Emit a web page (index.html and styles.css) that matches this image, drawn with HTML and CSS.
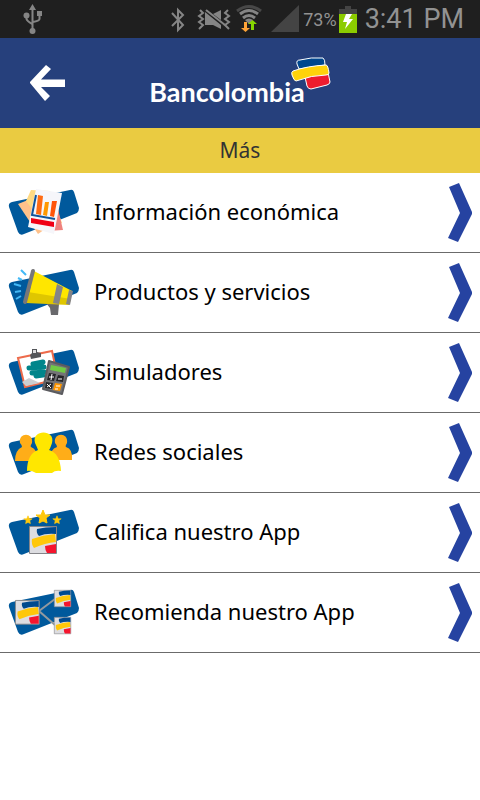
FILE: index.html
```
<!DOCTYPE html>
<html lang="es">
<head>
<meta charset="utf-8">
<meta name="viewport" content="width=device-width, initial-scale=1">
<title>Bancolombia - Más</title>
<link rel="stylesheet" href="styles.css">
</head>
<body>
<svg class="defs" width="0" height="0" aria-hidden="true">
  <defs>
    <path id="plate" fill="#00599c" d="M12 29L70 17Q73 16 74 19L79 35Q79 38 77 40L24 61Q20 63 18 59L9 34Q8 30 12 29Z"/>
    <g id="badge">
      <path fill="#dddde1" stroke="#858589" d="M.5 .5H27.500V27.500H.5Z"/>
      <path fill="#004a8f" d="M8 3Q16 1 27 1V8Q17 7 10 10Q7 7 8 3Z"/>
      <path fill="#ffc709" d="M3 13Q14 9 26 8L27 16Q16 17 5 22Q2 18 3 13Z"/>
      <path fill="#f5152e" d="M16 20L27 18V27H18Q16 24 16 20Z"/>
    </g>
    <path id="star" fill="#ffc80a" stroke="#ffc80a" stroke-linejoin="round" d="M0-7L2-2L7-2L3 1L4 6L0 4L-4 6L-3 1L-7-2L-2-2Z"/>
    <path id="chevron" fill="#2643a1" d="M9 10L19 6L32 35V37L18 65L8 61L20 36Z"/>
  </defs>
</svg>

<div class="status">
  <svg class="usb" width="20" height="30" viewBox="0 0 20 30" fill="none" stroke="#858585" stroke-width="2">
    <path d="M9.500 6V26M3.500 11V15Q4 17 9 20M16.500 10V15Q16 17 10 18"/>
    <g fill="#858585" stroke="none"><path d="M9.500 0L13 6H6ZM14 7H19V12H14Z"/><circle cx="3.500" cy="11.500" r="3"/><circle cx="9.500" cy="27" r="3"/></g>
  </svg>
  <svg class="radios" width="132" height="38" viewBox="0 0 132 38">
    <path fill="none" stroke="#858585" stroke-width="2" d="M1 13L12 25L7 30V10L12 15L1 26"/>
    <g fill="none" stroke="#858585" stroke-width="2"><path d="M29 10L32 13L28 16L32 19L28 22L32 25L28 29M57 10L54 13L58 16L54 19L58 22L54 25L58 29"/></g>
    <path fill="#858585" d="M34 12L50 25V29L42 25H34ZM42 14L50 10V20Z"/>
    <path stroke="#858585" stroke-width="2" d="M35 10L54 25"/>
    <g fill="none" stroke-width="3"><path stroke="#484848" d="M66 11Q78 2 90 11"/><path stroke="#858585" d="M69 14Q78 7 87 14M72 18Q78 13 84 18"/></g>
    <path fill="#858585" d="M74 20Q78 17 82 20L78 24Z"/>
    <path fill="#ffa438" d="M73 22H76V28H79L74.500 32L70 28H73Z"/><path fill="#86d600" d="M80 30V24H77L81.500 20L86 24H83V30Z"/>
    <path fill="#444" d="M128 5V32H100Z"/>
  </svg>
  <span class="percent">73%</span>
  <svg class="battery" width="18" height="28" viewBox="0 0 18 28"><path fill="#444" d="M6 1H12V4H18V9H0V4H6Z"/><path fill="#8ccc00" d="M0 9H18V28H0Z"/><path fill="#fff" d="M7 9H13L10 14H14L6 24L8 17H4Z"/></svg>
  <time class="clock">3:41 PM</time>
</div>

<header class="header">
  <button class="back" type="button" aria-label="Volver">
    <svg width="36" height="38" viewBox="0 0 36 38"><path fill="#fff" d="M16 1L21 5L11 15.500H35V23H11L20 32L15 37L0 19V18Z"/></svg>
  </button>
  <div class="brand">
    <span class="wordmark">Bancolombia</span>
    <svg class="flag" width="40" height="34" viewBox="0 0 40 34" stroke="#fff" stroke-linejoin="round">
      <path fill="#00478e" d="M6 7Q5 3 9 3Q20 0 32 1Q34 2 34 8L8 12Z"/>
      <path fill="#ed1c2e" d="M14 20L37 15L39 25Q39 27 36 28L20 32Q17 32 16 29Z"/>
      <path fill="#ffd20a" d="M2 14Q16 9 35 8Q37 8 38 16Q38 18 35 18Q21 18 5 24Q3 24 1 18Q0 15 2 14Z"/>
    </svg>
  </div>
</header>

<h1 class="title">Más</h1>

<nav class="menu">
  <a class="row" href="#economia">
    <svg class="icon" width="80" height="79" viewBox="0 0 80 79">
      <use href="#plate"/>
      <path fill="#ffc18a" d="M18 31L28 27L51 52L38 61Z"/><path fill="#ffd982" d="M31 17L50 18L62 50L48 57L26 28Z"/><path fill="#ef827d" d="M54 19L63 57L47 58Z"/>
      <path fill="#f6f6fa" d="M36 16L62 20L54 61L28 54Z"/>
      <path fill="none" stroke="#12549b" stroke-width="2" d="M36 22L32 42L55 46"/>
      <path fill="#ff6b12" d="M38 22L43 23L41 42L36 41Z"/><path fill="#ff9800" d="M45 29L49 29L47 43L43 42Z"/><path fill="#ff540a" d="M52 28L57 28L54 44L50 43Z"/>
      <path fill="#f00016" d="M31 45L54 49V54L31 50Z"/>
    </svg>
    <span class="label">Información económica</span>
    <svg class="chevron" width="40" height="79" viewBox="0 0 40 79"><use href="#chevron" y="4"/></svg>
  </a>
  <a class="row" href="#productos">
    <svg class="icon" width="80" height="79" viewBox="0 0 80 79">
      <use href="#plate"/>
      <path fill="none" stroke="#43b9f6" stroke-width="2" d="M21 17L26 22M18 25L22 27M14 31L21 33M15 39L21 38M16 46L21 43"/>
      <path fill="#69696c" d="M46 50L59 51L58 62H51L50 55Z"/>
      <path fill="#ffe600" d="M34 18L72 38L69 51L27 49Z"/><path fill="#dfc600" d="M28 39L71 46L69 52L26 50Z"/>
      <path fill="#848488" d="M57 31L63 34L59 51L53 50ZM69 37L73 38L70 52L66 51Z"/>
      <path fill="none" stroke="#77777a" stroke-width="4" stroke-linecap="round" d="M33 18L25 49"/>
    </svg>
    <span class="label">Productos y servicios</span>
    <svg class="chevron" width="40" height="79" viewBox="0 0 40 79"><use href="#chevron" y="4"/></svg>
  </a>
  <a class="row" href="#simuladores">
    <svg class="icon" width="80" height="79" viewBox="0 0 80 79">
      <use href="#plate"/>
      <path fill="#fff" stroke="#ed6b4b" stroke-width="2" d="M18 25L52 18L58 46L25 54Z"/><path fill="#cbcdd1" d="M22 49L29 45L40 50L26 53Z"/>
      <path fill="#54565a" d="M30 22L32 20V16H37V19L41 20V24L31 26Z"/><path fill="#dedee0" d="M33 17H36V20H33Z"/>
      <path stroke="#00858b" stroke-width="5" stroke-linecap="round" d="M33 31L43 29M29 35L44 34M32 40L44 39M36 43L43 42"/>
      <path fill="#747477" stroke="#5b5b5f" stroke-width="2" stroke-linejoin="round" d="M49 28L69 34L62 61L43 56Z"/>
      <path fill="#70ca45" d="M51 32L66 35L65 40L50 37Z"/>
      <path fill="#252528" d="M49 40L56 41L54 48L47 47ZM58 42L64 43L63 49L56 48ZM46 49L53 50L52 56L45 55Z"/><path fill="#ff9600" d="M55 50L62 51L60 58L53 57Z"/>
      <path stroke="#fff" stroke-width="1" d="M49 44L54 44M52 41L51 47M58 46L62 46M47 51L51 55M51 51L47 54M56 53H60M55 56H58"/>
    </svg>
    <span class="label">Simuladores</span>
    <svg class="chevron" width="40" height="79" viewBox="0 0 40 79"><use href="#chevron" y="4"/></svg>
  </a>
  <a class="row" href="#redes">
    <svg class="icon" width="80" height="79" viewBox="0 0 80 79">
      <use href="#plate"/>
      <path fill="#ffad18" d="M20 30C18 19 34 19 32 30Q30 33 31 34Q38 36 37 48H15Q15 37 22 34Q22 32 20 30ZM55 30C53 19 69 19 67 30Q65 33 66 34Q73 36 72 47H50Q50 36 57 34Q57 32 55 30Z"/>
      <path fill="#ffe700" d="M35 30C31 16 56 16 52 30Q50 36 49 37Q60 40 61 58Q55 57 52 60H36Q31 57 27 58Q27 41 38 37Q37 34 35 30Z"/>
    </svg>
    <span class="label">Redes sociales</span>
    <svg class="chevron" width="40" height="79" viewBox="0 0 40 79"><use href="#chevron" y="4"/></svg>
  </a>
  <a class="row" href="#califica">
    <svg class="icon" width="80" height="79" viewBox="0 0 80 79">
      <use href="#plate"/><use href="#badge" x="29" y="33"/>
      <use href="#star" x="43" y="24"/><use href="#star" transform="translate(28 27) scale(.6)"/><use href="#star" transform="translate(57 27) scale(.6)"/>
    </svg>
    <span class="label">Califica nuestro App</span>
    <svg class="chevron" width="40" height="79" viewBox="0 0 40 79"><use href="#chevron" y="4"/></svg>
  </a>
  <a class="row" href="#recomienda">
    <svg class="icon" width="80" height="79" viewBox="0 0 80 79">
      <use href="#plate"/><path fill="none" stroke="#92999f" stroke-width="2" d="M55 26L39 38L55 52"/>
      <use href="#badge" transform="translate(15 27) scale(.88)"/><use href="#badge" transform="translate(54 17) scale(.61)"/><use href="#badge" transform="translate(54 44) scale(.61)"/>
    </svg>
    <span class="label">Recomienda nuestro App</span>
    <svg class="chevron" width="40" height="79" viewBox="0 0 40 79"><use href="#chevron" y="4"/></svg>
  </a>
</nav>
</body>
</html>
```
FILE: styles.css
```
* { box-sizing: border-box; }
body { margin: 0; background: #fff; color: #000; font-family: "Noto Sans", sans-serif; }
svg { display: block; flex: none; }
.defs { position: absolute; }

.status { display: flex; align-items: center; height: 38px; padding: 0 16px 0 23px; background: #1f1f1f; color: #929292; font-family: Roboto, sans-serif; }
.radios { margin-left: auto; }
.percent { font-size: 18px; }
.battery { margin-left: 2px; }
.clock { margin-left: 8px; font-size: 27px; }

.header { display: grid; grid-template-columns: 96px 1fr 96px; align-items: center; height: 90px; background: #26407c; }
.back { justify-self: start; padding: 0 0 0 30px; border: 0; background: none; cursor: pointer; }
.brand { display: flex; justify-content: center; align-items: flex-start; }
.wordmark { padding-top: 17px; color: #fff; font-family: Lato, sans-serif; font-size: 27px; font-weight: 700; line-height: 36px; }
.flag { margin-left: -14px; }

.title { margin: 0; background: #eacb41; color: #333; font-size: 21px; font-weight: 400; line-height: 45px; text-align: center; }

.row { display: flex; align-items: center; border-bottom: 1px solid #6b6b6b; color: inherit; text-decoration: none; }
.label { flex: 1; padding: 0 0 3px 14px; font-size: 22px; line-height: 32px; }
```
